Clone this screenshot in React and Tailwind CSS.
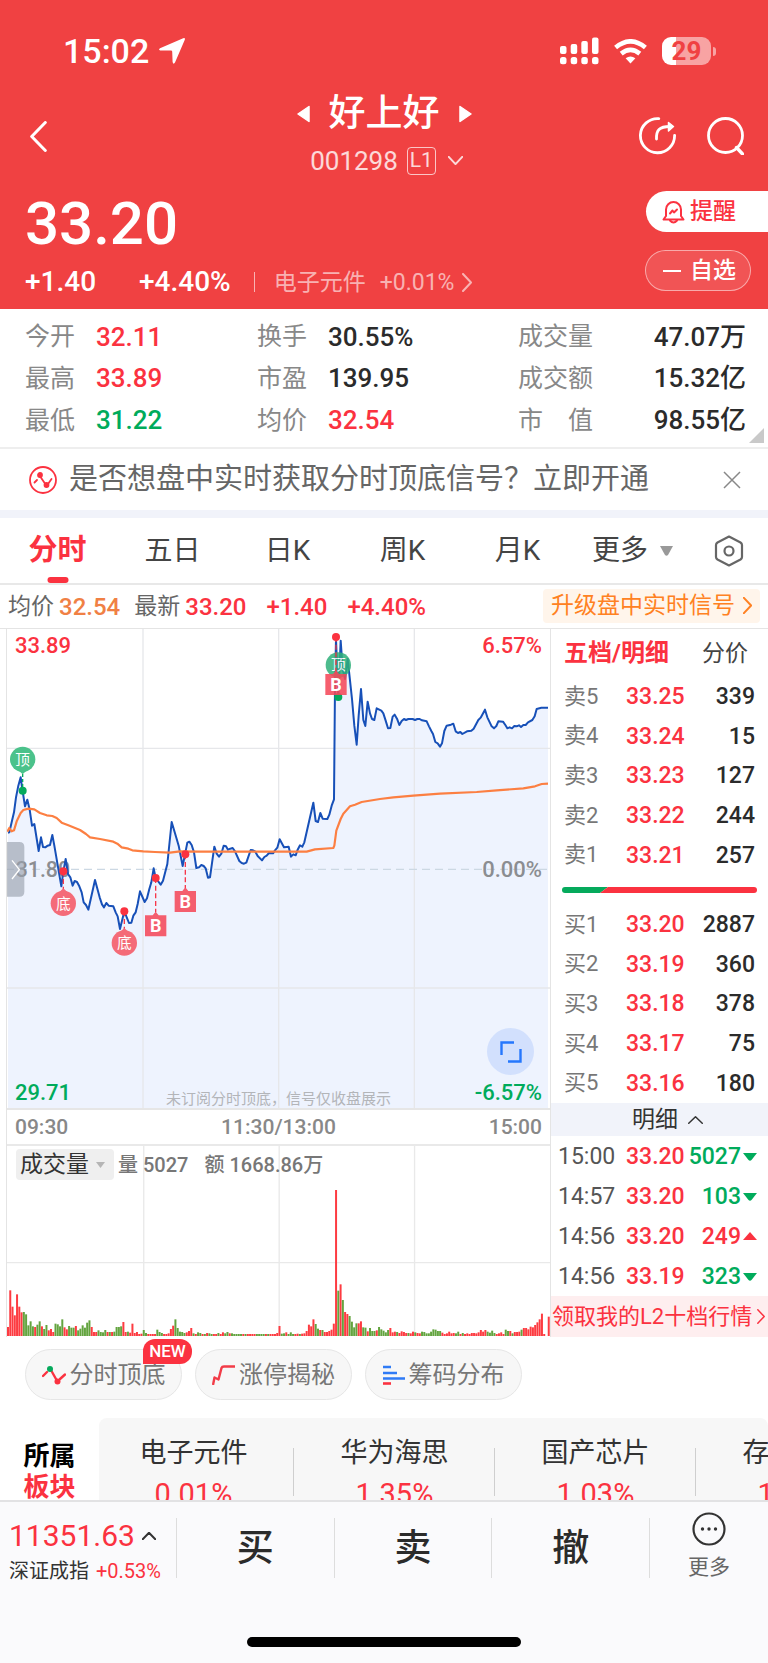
import React from "react";

const EARLY = [
  [24, 641], [28, 640], [36, 605], [42, 580], [48, 535], [55, 500], [62, 475], [67, 510], [75, 562], [82, 542],
  [89, 572], [96, 620], [103, 615], [116, 696], [123, 655], [129, 684], [136, 685], [143, 680], [150, 678], [157, 648],
  [163, 680], [184, 802], [190, 757], [197, 720], [204, 765], [211, 775], [218, 800], [224, 786], [231, 789], [238, 802],
  [245, 820], [251, 850], [258, 858], [265, 872], [285, 783], [299, 835], [306, 856], [312, 865], [319, 852], [326, 860],
  [340, 862], [347, 880], [353, 892], [360, 930], [373, 877], [387, 912], [394, 911], [400, 890], [407, 880], [413, 855],
  [420, 817], [434, 849], [441, 838], [448, 810], [454, 790], [461, 748], [467, 777], [482, 797], [489, 785], [495, 762],
  [502, 735], [515, 609], [529, 656], [536, 680], [548, 741], [555, 706], [562, 671], [568, 668], [575, 678], [582, 700],
  [589, 747], [597, 745], [604, 738], [611, 741], [617, 748], [624, 776], [630, 775], [643, 683], [650, 704], [657, 713],
  [664, 704], [671, 680], [678, 682], [684, 692], [691, 689], [698, 687], [705, 697], [718, 726], [725, 732], [732, 734],
  [739, 731], [752, 693], [759, 694], [766, 698], [773, 711], [786, 724], [793, 714], [800, 710], [807, 702],
];
const LATE = [
  [9, 703], [15, 694], [22, 686], [29, 661], [42, 685], [56, 683], [63, 713], [70, 706], [77, 709], [83, 692],
  [90, 679], [97, 683], [103, 670], [117, 608], [130, 551], [137, 606], [144, 609], [151, 582], [158, 599], [172, 600],
  [178, 587], [185, 560], [192, 541], [195, 200], [198, 60], [205, 235], [212, 65], [218, 150], [225, 180], [233, 120],
  [239, 175], [246, 240], [253, 320], [260, 377], [266, 290], [273, 210], [280, 303], [286, 321], [293, 248], [300, 283],
  [306, 300], [313, 303], [320, 268], [334, 275], [340, 283], [347, 305], [354, 328], [361, 327], [368, 293], [374, 287],
  [381, 299], [388, 318], [395, 306], [402, 300], [408, 303], [415, 300], [428, 300], [435, 303], [442, 300], [449, 300],
  [456, 304], [470, 307], [477, 322], [484, 336], [489, 345], [496, 369], [503, 373], [510, 383], [516, 373], [523, 336],
  [530, 320], [543, 317], [550, 314], [557, 337], [564, 342], [571, 339], [577, 345], [591, 337], [604, 335], [611, 329],
  [625, 303], [632, 296], [645, 272], [652, 295], [665, 322], [672, 328], [679, 321], [685, 307], [699, 308], [706, 318],
  [712, 328], [719, 325], [726, 328], [733, 321], [740, 322], [747, 319], [753, 324], [760, 318], [767, 318], [774, 310],
  [787, 303], [794, 292], [800, 270], [814, 266], [834, 266],
];
const AVG_EARLY = [
  [22, 638], [28, 627], [35, 637], [42, 634], [50, 607], [62, 582], [70, 573], [85, 569], [103, 571], [120, 582],
  [140, 589], [157, 591], [170, 597], [185, 611], [205, 619], [240, 633], [258, 645], [270, 655], [300, 660], [340, 668],
  [352, 674], [365, 685], [385, 689], [397, 694], [430, 697], [465, 699], [510, 701], [540, 697], [600, 698],
];
const AVG_LATE = [
  [30, 698], [110, 698], [135, 691], [190, 687], [193, 680], [199, 635], [212, 600], [220, 584], [240, 562], [255, 557],
  [275, 549], [330, 540], [370, 535], [430, 530], [510, 524], [620, 519], [680, 514], [760, 508], [795, 502], [815, 495],
  [834, 494],
];
const SESSION_SHIFT = 810;
const join = (a, b) =>
  [...a, ...b.map(([x, y]) => [x + SESSION_SHIFT, y])].map((p) => p.join(",")).join(" ");
const PRICE_LINE = join(EARLY, LATE);
const AVG_LINE = join(AVG_EARLY, AVG_LATE);

const VOLUMES = (
  "27r 137r 88r 62r 125r 88r 71r 72g 65g 32g 44g 29g 27r 34g 44g 29r 21g 33g 17r 21r 12r 37g 35g 29g 50g 26r 20r 30g 25g 25g " +
  "30r 17g 22g 32g 25g 40g 47g 27r 12r 12r 17g 12g 11g 18g 12r 12g 12r 13g 27g 27g 29g 42r 12r 13g 10r 37r 9r 12r 6r 7r " +
  "18g 9g 6r 6r 6r 6r 19g 12g 9g 6r 6r 8r 21r 31r 50g 24g 13g 12g 9g 11r 15r 24r 8g 6r 11g 9g 6r 6g 9r 8g " +
  "6g 6r 6r 9g 6r 11r 8g 12g 8r 8g 6g 6g 6g 6g 6r 6g 6r 6r 6r 6r 6g 6g 6g 6g 6r 6g 6r 6r 6r 9r " +
  "30r 7g 8g 11r 6g 11g 6g 6r 7r 6g 7r 8r 15r 34r 29r 50r 36g 22g 18r 18g 12r 12r 15r 19r 37r 438r 136g 155r 108g 72r " +
  "66r 60g 43g 26g 38g 38r 44r 26g 25g 14r 24g 15g 15g 17r 27g 20g 16g 11g 18g 24r 11r 13r 12g 9r 14r 12r 9r 9g 8r 13r " +
  "11g 9r 8r 13g 12g 8g 8g 13g 20g 19g 15g 15g 10r 6r 8r 13r 8r 9r 8g 13g 6r 9g 6r 8r 6r 9r 9r 8r 11r 18r " +
  "13r 18r 13g 10g 16g 9g 6r 8r 11r 6r 19g 15g 15r 8g 12r 12r 13r 19g 24r 24r 20r 28r 26r 33r 41r 50r 67r 6r 0r 58r"
).split(" ");

const STATS = [
  [["今开", "32.11", "text-[#fb3240]"], ["换手", "30.55%", "text-[#2b2b2b]"], ["成交量", "47.07万", "text-[#2b2b2b]"]],
  [["最高", "33.89", "text-[#fb3240]"], ["市盈", "139.95", "text-[#2b2b2b]"], ["成交额", "15.32亿", "text-[#2b2b2b]"]],
  [["最低", "31.22", "text-[#00ab5b]"], ["均价", "32.54", "text-[#fb3240]"], ["市　值", "98.55亿", "text-[#2b2b2b]"]],
];
const SELLS = [["卖5", "33.25", "339"], ["卖4", "33.24", "15"], ["卖3", "33.23", "127"], ["卖2", "33.22", "244"], ["卖1", "33.21", "257"]];
const BUYS = [["买1", "33.20", "2887"], ["买2", "33.19", "360"], ["买3", "33.18", "378"], ["买4", "33.17", "75"], ["买5", "33.16", "180"]];
const TRADES = [["15:00", "33.20", "5027", false], ["14:57", "33.20", "103", false], ["14:56", "33.20", "249", true], ["14:56", "33.19", "323", false]];
const SECTORS = [["电子元件", "0.01%"], ["华为海思", "1.35%"], ["国产芯片", "1.03%"], ["存储芯片", "1.20%"]];

function Chevron({ d, className, width = 2 }) {
  return (
    <svg viewBox="0 0 20 20" preserveAspectRatio="none" className={className} fill="none" stroke="currentColor" strokeWidth={width} strokeLinecap="round" strokeLinejoin="round" aria-hidden="true">
      <path d={d} vectorEffect="non-scaling-stroke" />
    </svg>
  );
}
const RIGHT = "M2 1 L18 10 L2 19";
const LEFT = "M18 1 L2 10 L18 19";
const DOWN = "M1 2 L10 18 L19 2";
const UP = "M1 18 L10 2 L19 18";

function StatusBar() {
  return (
    <div className="flex h-[84px] items-center justify-between pr-[52px] pl-[63px] pt-[18px]">
      <div className="flex items-center gap-[9px]">
        <span className="text-[34px] leading-none font-medium">15:02</span>
        <svg width="28" height="28" viewBox="0 0 28 28" aria-hidden="true">
          <path d="M25.2 1.2 Q27.6 .4 26.8 2.8 L17 25.6 Q15.4 28 14.6 25 L14.2 14.6 Q14 13.6 13 13.6 L2.2 13.4 Q0 12.600 2 11.200Z" fill="#fff" />
        </svg>
      </div>
      <div className="flex items-center gap-[15px]">
        <svg width="39" height="28" viewBox="0 0 39 28" fill="#fff" aria-hidden="true">
          <rect x="0" y="9" width="6.500" height="8" rx="2" /><rect x="10.700" y="7" width="6.500" height="10" rx="2" />
          <rect x="21.300" y="4" width="6.500" height="13" rx="2" /><rect x="32" y="0.500" width="6.500" height="16.500" rx="2" />
          <rect x="0" y="20" width="6.500" height="7.300" rx="2.500" /><rect x="10.700" y="20" width="6.500" height="7.300" rx="2.500" />
          <rect x="21.300" y="20" width="6.500" height="7.300" rx="2.500" /><rect x="32" y="20" width="6.500" height="7.300" rx="2.500" />
        </svg>
        <svg width="33" height="25" viewBox="0 0 33 25" fill="none" stroke="#fff" strokeWidth="4.600" aria-hidden="true">
          <path d="M1.600 8.500 Q16.500 -3.800 31.400 8.500" /><path d="M7.200 14.600 Q16.500 7 25.800 14.600" />
          <path d="M16.500 24.500 L11.600 19.300 Q16.500 15.500 21.400 19.300Z" fill="#fff" stroke="none" />
        </svg>
        <div className="flex items-center gap-[2px]">
          <div className="flex h-[28px] w-[49px] items-center justify-center rounded-[9px] bg-linear-to-r from-white from-29% to-[#f8a3a3] to-29% text-[26px] leading-none font-bold text-[#f04142]">29</div>
          <div className="h-[9px] w-[3px] rounded-r-[3px] bg-[#f8a3a3]" />
        </div>
      </div>
    </div>
  );
}

function TitleBar() {
  return (
    <div className="grid h-[104px] grid-cols-[1fr_auto_1fr] items-center">
      <button aria-label="返回" className="ml-[16px] flex size-[44px] items-center justify-center justify-self-start">
        <Chevron d={LEFT} className="h-[31px] w-[17px]" width={3} />
      </button>
      <div className="flex flex-col items-center">
        <div className="flex h-[49px] items-center gap-[19px]">
          <button aria-label="上一只"><svg width="13" height="18" viewBox="0 0 13 18" aria-hidden="true"><path d="M12 1.500V16.500L1 9Z" fill="#fff" stroke="#fff" strokeLinejoin="round" strokeWidth="1.500" /></svg></button>
          <h1 className="text-[37px] leading-none font-medium">好上好</h1>
          <button aria-label="下一只"><svg width="13" height="18" viewBox="0 0 13 18" aria-hidden="true"><path d="M1 1.500V16.500L12 9Z" fill="#fff" stroke="#fff" strokeLinejoin="round" strokeWidth="1.500" /></svg></button>
        </div>
        <button className="flex h-[45px] items-center pl-[5px] text-white/80">
          <span className="text-[26px] leading-none">001298</span>
          <span className="ml-[9px] flex h-[28px] w-[29px] items-center justify-center rounded-[4px] border border-white/70 text-[21px] leading-none">L1</span>
          <Chevron d={DOWN} className="ml-[12px] h-[9px] w-[15px]" />
        </button>
      </div>
      <div className="mr-[24px] flex items-center gap-[30px] justify-self-end">
        <button aria-label="分享">
          <svg width="38" height="38" viewBox="0 0 38 38" fill="none" stroke="#fff" strokeWidth="2.800" strokeLinecap="round" strokeLinejoin="round" aria-hidden="true">
            <path d="M19.800 1.600 A17.100 17.100 0 1 0 35.600 18.300" /><path d="M17.500 22 C17.200 13.500 20 9.500 31 9.500" /><path d="M29.500 5.500 L34.500 9.500 L29.500 14Z" fill="#fff" strokeWidth="1.500" />
          </svg>
        </button>
        <button aria-label="搜索">
          <svg width="37" height="38" viewBox="0 0 37 38" fill="none" stroke="#fff" strokeWidth="2.800" strokeLinecap="round" aria-hidden="true">
            <circle cx="18.500" cy="18.500" r="17" /><path d="M29.500 30.500 L35.500 37" strokeWidth="3.400" />
          </svg>
        </button>
      </div>
    </div>
  );
}

function PriceBlock() {
  return (
    <div className="flex h-[121px] justify-between">
      <div className="pl-[25px]">
        <div className="flex h-[71px] items-center text-[60px] leading-none font-medium">33.20</div>
        <div className="flex h-[46px] items-center leading-none whitespace-nowrap">
          <span className="w-[114px] text-[28px] font-medium">+1.40</span>
          <span className="text-[28px] font-medium">+4.40%</span>
          <span className="mr-[19px] ml-[23px] h-[20px] w-px bg-white/60" />
          <a href="#sector" className="flex items-center text-[23px] text-white/60">
            电子元件<span className="ml-[14px]">+0.01%</span>
            <Chevron d={RIGHT} className="ml-[8px] h-[19px] w-[10px]" />
          </a>
        </div>
      </div>
      <div className="flex flex-col items-end gap-[18px] pt-[3px] text-[23px] leading-none font-medium">
        <button className="flex h-[41px] w-[122px] items-center gap-[5px] rounded-l-full bg-white pl-[16px] text-[#fb3240]">
          <svg width="23" height="24" viewBox="0 0 23 24" fill="none" stroke="#fb3240" strokeWidth="2" strokeLinejoin="round" strokeLinecap="round" aria-hidden="true">
            <path d="M1.500 19.500 H21.500 L19 16 V9.500 A7.500 7.500 0 0 0 4 9.500 V16Z" /><path d="M8 20.500 Q11.500 24.500 15 20.500" /><path d="M8 13.500 L10.500 10.500 L12 12.500 L15 9.500" />
          </svg>
          提醒
        </button>
        <button className="mr-[17px] flex h-[41px] w-[106px] items-center gap-[9px] rounded-full border border-white/50 bg-white/10 pl-[17px]">
          <span className="h-[2px] w-[18px] bg-white" />自选
        </button>
      </div>
    </div>
  );
}

function Stats() {
  return (
    <section className="relative border-b-2 border-[#eeeeee] pt-[7px] pb-[6px]">
      <table className="h-[125px] w-full border-collapse leading-none">
        <tbody>
          {STATS.map((row) => (
            <tr key={row[0][0]}>
              {row.map(([label, value, color], i) => (
                <React.Fragment key={label}>
                  <th scope="row" className={["w-[96px] pl-[25px]", "w-[71px]", "w-[100px]"][i] + " p-0 text-left text-[25px] font-normal whitespace-nowrap text-[#888888]"}>{label}</th>
                  <td className={["w-[161px] text-left", "w-[190px] text-left", "pr-[22px] text-right"][i] + " p-0 text-[26px] font-medium whitespace-nowrap " + color}>{value}</td>
                </React.Fragment>
              ))}
            </tr>
          ))}
        </tbody>
      </table>
      <svg className="absolute right-[4px] bottom-[4px]" width="15" height="15" viewBox="0 0 15 15" aria-hidden="true"><path d="M15 0V15H0Z" fill="#c9c9c9" /></svg>
    </section>
  );
}

function Banner() {
  return (
    <section className="flex h-[61px] items-center pr-[27px] pl-[29px]">
      <svg width="28" height="28" viewBox="0 0 28 28" fill="none" stroke="#fb3240" strokeWidth="1.800" aria-hidden="true">
        <circle cx="14" cy="14" r="13" /><path d="M5.500 16.500 L8 14 M10.500 9.500 L17 19 M19 18 L22.500 13" strokeLinecap="round" />
        <circle cx="11" cy="9" r="2" fill="#fb3240" /><circle cx="17.500" cy="19" r="2" fill="#fb3240" />
      </svg>
      <a href="#open" className="ml-[12px] flex-1 text-[29px] leading-none whitespace-nowrap text-[#666666]">是否想盘中实时获取分时顶底信号？立即开通</a>
      <button aria-label="关闭">
        <svg width="18" height="18" viewBox="0 0 18 18" stroke="#888" strokeWidth="1.500" aria-hidden="true"><path d="M1 1L17 17M17 1L1 17" /></svg>
      </button>
    </section>
  );
}

function Tabs() {
  return (
    <nav className="grid h-[67px] grid-cols-[repeat(6,115fr)_78fr] border-b-2 border-[#e8e8e8] text-[28px] leading-none text-[#444444]">
      <button className="relative flex h-full items-center justify-center text-[29px] font-bold text-[#fb3240]">
        分时<span className="absolute bottom-0 left-1/2 h-[6px] w-[21px] -translate-x-1/2 rounded-full bg-[#fb3240]" />
      </button>
      <button>五日</button>
      <button>日K</button>
      <button>周K</button>
      <button>月K</button>
      <button className="flex items-center justify-center gap-[12px]">更多
        <svg width="13" height="10" viewBox="0 0 13 10" aria-hidden="true"><path d="M0 0H13L8 9Q6.500 10.500 5 9Z" fill="#999" /></svg>
      </button>
      <button aria-label="设置" className="flex items-center justify-center">
        <svg width="30" height="32" viewBox="0 0 30 32" fill="none" stroke="#666" strokeWidth="2.200" strokeLinejoin="round" aria-hidden="true">
          <path d="M15 1.500 L26.500 7.500 Q28 8.500 28 10 V22 Q28 23.500 26.500 24.500 L15 30.500 L3.500 24.500 Q2 23.500 2 22 V10 Q2 8.500 3.500 7.500Z" /><circle cx="15" cy="16" r="4.500" />
        </svg>
      </button>
    </nav>
  );
}

function InfoRow() {
  return (
    <div className="flex h-[43px] items-center pr-[8px] pl-[8px] text-[24px] leading-none font-medium whitespace-nowrap text-[#fb3240]">
      <span className="text-[23px] font-normal text-[#666666]">均价</span>
      <span className="ml-[5px] text-[#f08044]">32.54</span>
      <span className="ml-[14px] text-[23px] font-normal text-[#666666]">最新</span>
      <span className="ml-[5px]">33.20</span>
      <span className="ml-[20px]">+1.40</span>
      <span className="ml-[20px]">+4.40%</span>
      <a href="#upgrade" className="mb-[2px] ml-auto flex h-[34px] items-center gap-[8px] rounded-[4px] bg-[#fff5eb] px-[8px] text-[23px] font-normal text-[#ff8122]">
        升级盘中实时信号<Chevron d={RIGHT} className="h-[17px] w-[9px]" />
      </a>
    </div>
  );
}

function Pin({ x, y, up, color, label }) {
  const s = up ? -1 : 1;
  return (
    <g>
      <path d={`M${x - 16} ${y + 30 * s} L${x} ${y + 45 * s} L${x + 16} ${y + 30 * s}Z`} fill={color} />
      <circle cx={x} cy={y} r="38" fill={color} />
      <text x={x} y={y + 16} textAnchor="middle" fontSize="44" fill="#fff">{label}</text>
    </g>
  );
}

function BuyFlag({ x, y }) {
  return (
    <g>
      <path d={`M${x - 32} ${y - 31} H${x - 9} L${x} ${y - 42} L${x + 9} ${y - 31} H${x + 32} V${y + 32} H${x - 32}Z`} fill="#f5495a" fillOpacity=".88" />
      <text x={x} y={y + 19} textAnchor="middle" fontSize="54" fontWeight="700" fill="#fff">B</text>
    </g>
  );
}

function PriceChart() {
  return (
    <div className="relative h-[481px] border-b-2 border-[#e6e6e6] text-[22px] leading-[24px] font-medium">
      <svg viewBox="21 30 1629 1437" preserveAspectRatio="none" className="block size-full font-normal" fill="none" role="img" aria-label="分时走势">
        <polygon points={`24,1470 ${PRICE_LINE} 1644,1470`} fill="#eef3fe" />
        <path d="M429 27V1470M836 27V1470M1243 27V1470M18 388H1653M18 1107H1653" stroke="#e6e7ea" strokeWidth="4" />
        <path d="M18 751H1653" stroke="#ccd8e3" strokeWidth="4" strokeDasharray="24 15" />
        <text x="47" y="773" fontSize="64" fontWeight="500" fill="#8b8d91">31.80</text>
        <path d="M18 669H58Q73 669 73 684V818Q73 833 58 833H18Z" fill="#9aa1ad" fillOpacity=".65" />
        <path d="M36 724L58 752L36 780" stroke="#fff" strokeWidth="4" />
        <polyline points={PRICE_LINE} stroke="#1750b8" strokeWidth="6" strokeLinejoin="round" />
        <polyline points={AVG_LINE} stroke="#fc7f42" strokeWidth="6.500" strokeLinejoin="round" />
        <path d="M68 465V515" stroke="#05aa5c" strokeWidth="4" strokeDasharray="9 6" />
        <path d="M190 757V810M373 877V930M467 777V880M556 706V808" stroke="#f7374a" strokeWidth="4" strokeDasharray="15 8" />
        <Pin x={68} y={421} color="#4bc28b" label="顶" />
        <Pin x={190} y={853} up color="#f46b78" label="底" />
        <Pin x={373} y={972} up color="#f46b78" label="底" />
        <circle cx="68" cy="515" r="12" fill="#05aa5c" />
        <g fill="#fb3240"><circle cx="190" cy="757" r="12" /><circle cx="373" cy="877" r="12" /><circle cx="467" cy="777" r="12" /><circle cx="556" cy="706" r="12" /></g>
        <BuyFlag x={467} y={920} />
        <BuyFlag x={556} y={847} />
        <circle cx="1015" cy="234" r="12" fill="#05aa5c" />
        <g opacity=".85"><Pin x={1015} y={138} color="#2fb07a" label="顶" /></g>
        <path d="M1008 54V165" stroke="#e8344a" strokeWidth="4" strokeDasharray="15 8" />
        <BuyFlag x={1008} y={196} />
        <circle cx="1008" cy="54" r="12" fill="#fb3240" />
      </svg>
      <span className="absolute top-[5px] left-[8px] text-[#fb3240]">33.89</span>
      <span className="absolute top-[5px] right-[8px] text-[#fb3240]">6.57%</span>
      <span className="absolute top-[229px] right-[8px] text-[#8b8d91]">0.00%</span>
      <span className="absolute bottom-[3px] left-[8px] text-[#00ab5b]">29.71</span>
      <span className="absolute right-[8px] bottom-[3px] text-[#00ab5b]">-6.57%</span>
      <span className="absolute bottom-0 left-1/2 -translate-x-1/2 text-[15px] leading-[18px] font-normal whitespace-nowrap text-[#b3b5b9]">未订阅分时顶底，信号仅收盘展示</span>
      <button aria-label="放大" className="absolute right-[16px] bottom-[33px] flex size-[47px] items-center justify-center rounded-full bg-[#d2e0fd]">
        <svg width="22" height="22" viewBox="0 0 22 22" fill="none" stroke="#2577fd" strokeWidth="2.400" aria-hidden="true"><path d="M1.500 14V1.500H14M20.500 8V20.500H8" /></svg>
      </button>
    </div>
  );
}

function VolumeChart() {
  return (
    <div className="relative h-[190px]">
      <svg viewBox="18 18 1632 570" preserveAspectRatio="none" className="block size-full" role="img" aria-label="成交量">
        <path d="M429 18V588M836 18V588M1243 18V588M18 368H1653" stroke="#e9e9e9" strokeWidth="4" />
        {VOLUMES.map((v, i) => {
          const h = parseInt(v, 10);
          return <rect key={i} x={18 + i * 6.8} y={588 - h} width="6" height={h} fill={v.endsWith("r") ? "#fd3b41" : "#63a43f"} />;
        })}
      </svg>
      <div className="absolute top-[3px] left-[9px] flex items-center text-[20px] leading-none whitespace-nowrap text-[#777777]">
        <button className="flex h-[31px] w-[98px] items-center gap-[7px] rounded-[4px] bg-[#efefef] pl-[4px] text-[23px] leading-none text-[#333333]">
          成交量<svg width="9" height="6" viewBox="0 0 9 6" aria-hidden="true"><path d="M0 0H9L4.500 6Z" fill="#b5b5b5" /></svg>
        </button>
        <span className="ml-[4px] font-medium">量 5027</span>
        <span className="ml-[16px] font-medium">额 1668.86万</span>
      </div>
    </div>
  );
}

function Book({ rows, label }) {
  return (
    <table aria-label={label} className="h-[198px] w-full table-fixed border-collapse text-[23px] leading-none">
      <tbody>
        {rows.map(([name, price, amount]) => (
          <tr key={name}>
            <th scope="row" className="w-[75px] p-0 pl-[13px] text-left text-[22px] font-normal text-[#777777]">{name}</th>
            <td className="w-[58px] p-0 text-left font-medium text-[#fb3240]">{price}</td>
            <td className="p-0 pr-[13px] text-right font-medium text-[#2b2b2b]">{amount}</td>
          </tr>
        ))}
      </tbody>
    </table>
  );
}

function OrderBook() {
  return (
    <aside className="flex flex-col">
      <div className="flex h-[48px] items-center justify-between pr-[20px] pl-[13px] text-[23px] leading-none">
        <button className="text-[24px] font-bold text-[#fb3240]">五档/明细</button>
        <button className="text-[#444444]">分价</button>
      </div>
      <Book rows={SELLS} label="卖盘" />
      <div className="flex h-[30px] items-center pr-[11px] pl-[11px]">
        <svg viewBox="0 0 195 6" preserveAspectRatio="none" className="h-[6px] w-full rounded-full" aria-hidden="true">
          <path d="M0 0H46L38 6H0Z" fill="#05aa5c" /><path d="M46 0H195V6H38Z" fill="#fb3240" />
        </svg>
      </div>
      <Book rows={BUYS} label="买盘" />
      <button className="flex h-[33px] items-center justify-center gap-[10px] bg-[#f1f3fa] pl-[16px] text-[23px] leading-none text-[#333333]">
        明细<Chevron d={UP} className="h-[8px] w-[15px]" width={1.5} />
      </button>
      <table aria-label="成交明细" className="h-[160px] w-full table-fixed border-collapse text-[23px] leading-none font-medium">
        <tbody>
          {TRADES.map(([time, price, amount, up], i) => (
            <tr key={i}>
              <td className="w-[75px] p-0 pl-[7px] font-normal text-[#555555]">{time}</td>
              <td className="w-[58px] p-0 text-[#fb3240]">{price}</td>
              <td className={"p-0 pr-[11px] text-right " + (up ? "text-[#fb3240]" : "text-[#00ab5b]")}>
                <span className="inline-flex items-center gap-[2px]">{amount}
                  <svg width="14" height="9" viewBox="0 0 14 9" fill="currentColor" aria-hidden="true"><path d={up ? "M7 0L14 8H0Z" : "M0 1H14L8.500 8Q7 9.500 5.500 8Z"} /></svg>
                </span>
              </td>
            </tr>
          ))}
        </tbody>
      </table>
      <a href="#l2" className="flex h-[41px] items-center justify-between bg-[#feeeef] pr-[3px] pl-px text-[22px] leading-none whitespace-nowrap text-[#fb3240]">
        领取我的L2十档行情<Chevron d={RIGHT} className="h-[15px] w-[8px]" width={1.5} />
      </a>
    </aside>
  );
}

function Pills() {
  const pill = "relative flex h-[51px] w-[157px] items-center justify-center gap-[4px] rounded-full border border-[#e6e6e6] bg-[#f7f7f7] text-[24px] leading-none whitespace-nowrap text-[#777777]";
  return (
    <div className="flex gap-[13px] pt-[12px] pl-[25px]">
      <button className={pill}>
        <svg width="24" height="20" viewBox="0 0 24 20" fill="none" strokeWidth="2.400" aria-hidden="true">
          <path d="M1 11L5 7M9.500 6L14 14M18 14L23 9.500" stroke="#fb3240" strokeLinecap="round" /><circle cx="8" cy="4" r="3" fill="#05aa5c" /><circle cx="15.500" cy="16.500" r="3" fill="#fb3240" />
        </svg>
        分时顶底
        <span className="absolute top-[-11px] right-[-11px] flex h-[25px] w-[49px] items-center justify-center rounded-[12px] rounded-bl-none bg-[#fb3240] text-[17px] leading-none font-medium text-white">NEW</span>
      </button>
      <button className={pill}>
        <svg width="23" height="20" viewBox="0 0 23 20" fill="none" stroke="#f23c48" strokeWidth="2.400" strokeLinejoin="round" aria-hidden="true"><path d="M1 20L2.500 12.500L6.500 14.500L9.500 3Q10 1.500 12 1.500H23" /></svg>
        涨停揭秘
      </button>
      <button className={pill}>
        <svg width="22" height="20" viewBox="0 0 22 20" strokeWidth="2.600" aria-hidden="true"><path d="M0 2H8M0 8H14M0 13.500H22" stroke="#2f7bf6" /><path d="M0 18.500H8" stroke="#fb3240" /></svg>
        筹码分布
      </button>
    </div>
  );
}

function Sectors() {
  return (
    <section id="sector" className="mt-[18px] flex h-[82px] overflow-hidden">
      <h2 className="w-[99px] shrink-0 pt-[23px] text-center text-[26px] leading-[31px] font-bold text-black">所属<br /><span className="text-[#fb3240]">板块</span></h2>
      <div className="flex min-w-0 flex-1 overflow-hidden rounded-t-[8px] bg-[#f7f7f7]">
        {SECTORS.map(([name, pct], i) => (
          <a key={name} href="#sector" className={"relative flex shrink-0 flex-col items-center pt-[15px] whitespace-nowrap " + (i === 0 ? "w-[195px] pr-[6px]" : "w-[201px]")}>
            <span className="text-[27px] leading-[40px] text-[#333333]">{name}</span>
            <span className="text-[29px] leading-[42px] text-[#fb3240]">{pct}</span>
            <span className="absolute top-[30px] right-0 h-[48px] w-px bg-[#cfcfcf]" />
          </a>
        ))}
      </div>
    </section>
  );
}

function Footer() {
  return (
    <footer className="flex h-[164px] flex-col justify-between border-t-2 border-[#e2e2e4] bg-[#fafafc] pt-[16px] pb-[17px]">
      <div className="flex h-[60px]">
        <button className="flex w-[177px] flex-col gap-[10px] border-r border-[#dddddd] pt-[3px] pl-[9px] text-left whitespace-nowrap">
          <span className="flex items-center gap-[7px] text-[30px] leading-none text-[#fb3240]">11351.63
            <Chevron d={UP} className="h-[8px] w-[14px] text-[#333333]" />
          </span>
          <span className="text-[20px] leading-none text-[#333333]">深证成指 <span className="ml-[2px] text-[#fb3240]">+0.53%</span></span>
        </button>
        <button className="flex-1 border-r border-[#dddddd] text-[37px] leading-none font-medium text-[#2b2b2b]">买</button>
        <button className="flex-1 border-r border-[#dddddd] text-[37px] leading-none font-medium text-[#2b2b2b]">卖</button>
        <button className="flex-1 border-r border-[#dddddd] text-[37px] leading-none font-medium text-[#2b2b2b]">撤</button>
        <button className="flex w-[118px] flex-col items-center justify-between text-[21px] leading-none text-[#666666]">
          <svg className="-mt-[6px]" width="34" height="34" viewBox="0 0 34 34" fill="none" aria-hidden="true">
            <circle cx="17" cy="17" r="15.500" stroke="#333" strokeWidth="2.200" /><g fill="#333"><circle cx="10.500" cy="17" r="1.700" /><circle cx="17" cy="17" r="1.700" /><circle cx="23.500" cy="17" r="1.700" /></g>
          </svg>
          更多
        </button>
      </div>
      <div className="mx-auto h-[10px] w-[274px] rounded-full bg-black" />
    </footer>
  );
}

export default function App() {
  return (
    <div className="min-h-screen overflow-hidden bg-white font-[Roboto,'Noto_Sans_CJK_SC',sans-serif]">
      <header className="bg-[#f04142] text-white">
        <StatusBar />
        <TitleBar />
        <PriceBlock />
      </header>
      <main>
        <Stats />
        <Banner />
        <div className="h-[8px] bg-[#f1f3fa]" />
        <Tabs />
        <InfoRow />
        <div className="grid grid-cols-[minmax(0,1fr)_217px] border-t border-[#e4e4e4]">
          <div className="ml-[6px] border-r border-l border-[#e4e4e4]">
            <PriceChart />
            <div className="flex h-[36px] items-center justify-between border-b-2 border-[#e9e9e9] px-[8px] text-[21px] leading-none font-medium text-[#888888]">
              <span>09:30</span><span>11:30/13:00</span><span>15:00</span>
            </div>
            <VolumeChart />
          </div>
          <OrderBook />
        </div>
        <Pills />
        <Sectors />
      </main>
      <Footer />
    </div>
  );
}
